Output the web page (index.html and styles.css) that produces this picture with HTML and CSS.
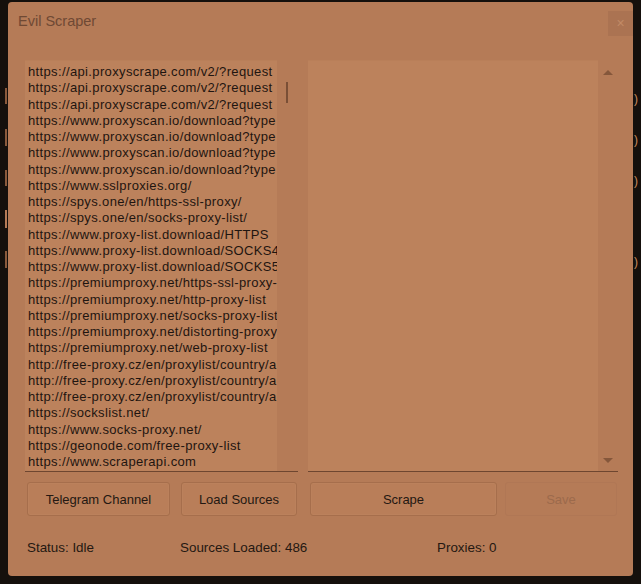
FILE: index.html
```html
<!DOCTYPE html>
<html>
<head>
<meta charset="utf-8">
<link rel="stylesheet" href="styles.css">
</head>
<body>
<div class="desk">
  <div class="bg-marks left">
    <span class="mk m1"></span><span class="mk m2"></span><span class="mk m3"></span><span class="mk m4"></span><span class="mk m5"></span>
  </div>
  <div class="bg-marks right">
    <span class="pr p1">)</span><span class="pr p2">)</span><span class="pr p3">)</span><span class="pr p4">)</span>
  </div>
  <div class="window">
    <div class="titlebar">
      <span class="title">Evil Scraper</span>
      <span class="close">×</span>
    </div>
    <div class="lists">
      <div class="listbox left-list">
        <div class="items">
          <div>https://api.proxyscrape.com/v2/?request</div>
          <div>https://api.proxyscrape.com/v2/?request</div>
          <div>https://api.proxyscrape.com/v2/?request</div>
          <div>https://www.proxyscan.io/download?type</div>
          <div>https://www.proxyscan.io/download?type</div>
          <div>https://www.proxyscan.io/download?type</div>
          <div>https://www.proxyscan.io/download?type</div>
          <div>https://www.sslproxies.org/</div>
          <div>https://spys.one/en/https-ssl-proxy/</div>
          <div>https://spys.one/en/socks-proxy-list/</div>
          <div>https://www.proxy-list.download/HTTPS</div>
          <div>https://www.proxy-list.download/SOCKS4</div>
          <div>https://www.proxy-list.download/SOCKS5</div>
          <div>https://premiumproxy.net/https-ssl-proxy-li</div>
          <div>https://premiumproxy.net/http-proxy-list</div>
          <div>https://premiumproxy.net/socks-proxy-list</div>
          <div>https://premiumproxy.net/distorting-proxy-l</div>
          <div>https://premiumproxy.net/web-proxy-list</div>
          <div>http://free-proxy.cz/en/proxylist/country/a</div>
          <div>http://free-proxy.cz/en/proxylist/country/a</div>
          <div>http://free-proxy.cz/en/proxylist/country/a</div>
          <div>https://sockslist.net/</div>
          <div>https://www.socks-proxy.net/</div>
          <div>https://geonode.com/free-proxy-list</div>
          <div>https://www.scraperapi.com</div>
        </div>
        <div class="vscroll thin"><span class="thumb"></span></div>
      </div>
      <div class="listbox right-list">
        <div class="items"></div>
        <div class="vscroll arrows">
          <svg width="12" height="8" viewBox="0 0 12 8"><path d="M1 7 L6 2 L11 7 Z" fill="#85573b"/></svg>
          <svg width="12" height="8" viewBox="0 0 12 8"><path d="M1 1 L6 6 L11 1 Z" fill="#85573b"/></svg>
        </div>
      </div>
    </div>
    <div class="buttons">
      <button class="btn b-tele">Telegram Channel</button>
      <button class="btn b-load">Load Sources</button>
      <button class="btn b-scrape">Scrape</button>
      <button class="btn b-save" disabled>Save</button>
    </div>
    <div class="status">
      <span class="s-status">Status: Idle</span>
      <span class="s-sources">Sources Loaded: 486</span>
      <span class="s-proxies">Proxies: 0</span>
    </div>
  </div>
</div>
</body>
</html>
```
FILE: styles.css
```css
html, body {
  margin: 0;
  padding: 0;
  background: #15100c;
}
.desk {
  position: relative;
  width: 641px;
  height: 584px;
  padding: 2px 8px 0 8px;
  box-sizing: border-box;
}
.bg-marks { position: absolute; top: 0; }
.bg-marks.left { left: 0; }
.bg-marks.right { left: 634px; }
.mk {
  position: absolute;
  left: 5px;
  width: 2px;
  background: #8a5a3c;
}
.m1 { top: 88px; height: 16px; }
.m2 { top: 129px; height: 17px; }
.m3 { top: 170px; height: 16px; }
.m4 { top: 210px; height: 18px; background: #b57b57; }
.m5 { top: 251px; height: 17px; }
.pr {
  position: absolute;
  left: 0;
  font: 12px "Liberation Sans", Arial, sans-serif;
  color: #c88a5f;
}
.p1 { top: 92px; }
.p2 { top: 133px; }
.p3 { top: 174px; }
.p4 { top: 255px; }

.window {
  width: 625px;
  height: 574px;
  background: #b57b57;
  border-radius: 4px;
  display: flex;
  flex-direction: column;
  font-family: "Liberation Sans", Arial, sans-serif;
  position: relative;
}
.titlebar {
  height: 58px;
  display: flex;
  justify-content: space-between;
  align-items: flex-start;
  padding-left: 10px;
}
.title {
  margin-top: 11px;
  font-size: 14.5px;
  color: #6f4934;
}
.close {
  margin-top: 9px;
  width: 25px;
  height: 25px;
  background: #ab7352;
  color: #c28a66;
  font-size: 14px;
  line-height: 24px;
  text-align: center;
}
.lists {
  display: flex;
  padding-left: 17px;
  gap: 10px;
}
.listbox {
  height: 411px;
  background: #bc825c;
  border-bottom: 1px solid #6e4630;
  display: flex;
  box-shadow: inset 0 1px 0 #b97f59;
}
.left-list { width: 273px; }
.right-list { width: 310px; }
.items {
  flex: 1;
  overflow: hidden;
  padding: 4px 0 0 3px;
  font-size: 13px;
  letter-spacing: 0.36px;
  line-height: 16.25px;
  color: #1f1510;
  white-space: nowrap;
}
.vscroll {
  width: 20px;
  background: #b57b57;
  position: relative;
}
.left-list .vscroll { width: 21px; }
.thumb {
  position: absolute;
  left: 9px;
  top: 22px;
  width: 2px;
  height: 21px;
  background: #7a4f36;
}
.arrows {
  display: flex;
  flex-direction: column;
  justify-content: space-between;
  align-items: center;
  padding: 8px 0 6px;
  box-sizing: border-box;
}
.buttons {
  display: flex;
  padding-left: 19px;
  margin-top: 10px;
  height: 34px;
}
.btn {
  height: 34px;
  background: #b97e59;
  border: 1px solid #a66e4c;
  border-radius: 3px;
  font-family: "Liberation Sans", Arial, sans-serif;
  font-size: 13px;
  color: #241812;
  padding: 0;
  box-shadow: inset 0 0 0 1px #bb815c;
}
.b-tele { width: 143px; }
.b-load { width: 116px; margin-left: 11px; }
.b-scrape { width: 187px; margin-left: 13px; }
.b-save {
  width: 112px;
  margin-left: 8px;
  color: #9c6a4c;
  background: #b57b57;
  border-color: #b07755;
  box-shadow: none;
}
.status {
  display: flex;
  padding-left: 19px;
  margin-top: 24px;
  font-size: 13.4px;
  color: #241812;
}
.s-status { width: 153px; }
.s-sources { width: 257px; }
```
